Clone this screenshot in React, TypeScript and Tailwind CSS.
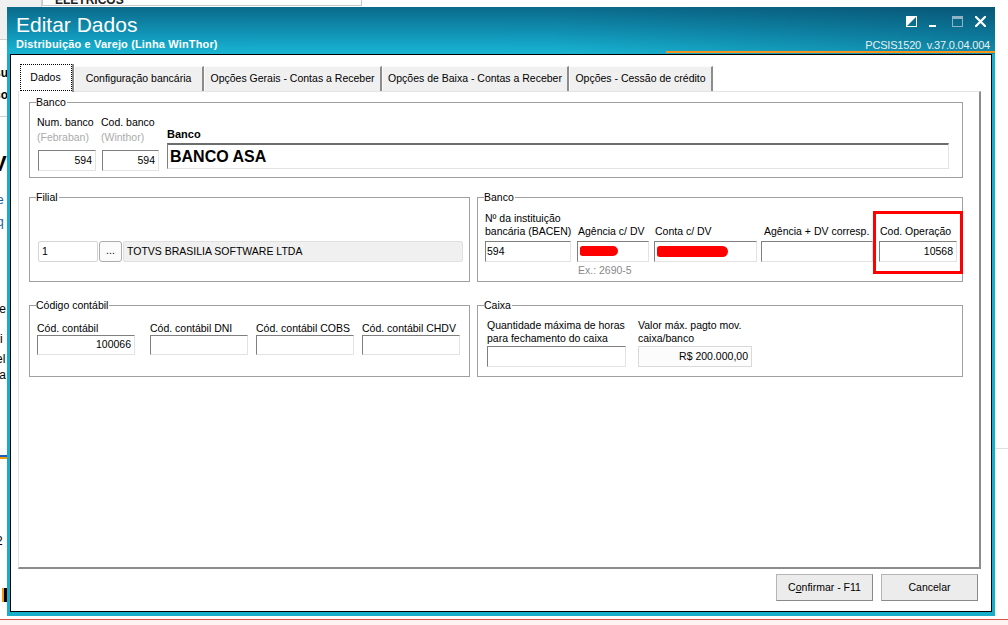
import React from "react";

const sunken =
  "bg-white border border-t-[#7f7f7f] border-l-[#7f7f7f] border-r-[#e3e3e3] border-b-[#e3e3e3]";

function Group({
  title,
  className,
  children,
}: {
  title: string;
  className: string;
  children?: React.ReactNode;
}) {
  return (
    <div className={`relative border border-[#a0a0a0] ${className}`}>
      <span className="absolute left-[6px] top-[-8px] bg-white pr-[1px] leading-[14px] whitespace-nowrap">
        {title}
      </span>
      {children}
    </div>
  );
}

function Backdrop() {
  return (
    <>
      <div className="absolute left-0 top-0 w-[42px] h-[40px] bg-[#f0f0f0] border-r border-b border-[#cfcfcf]" />
      <div className="absolute left-[42px] top-[-6px] w-[320px] h-[12px] bg-white border border-[#c8c8c8] overflow-hidden">
        <span className="absolute left-[12px] top-[-4px] text-[12px] font-bold text-[#222]">ELETRICOS</span>
      </div>
      <span className="absolute left-[-6px] top-[64px] text-[12px] font-bold">su</span>
      <span className="absolute left-[-6px] top-[86px] text-[12px] font-bold">co</span>
      <div className="absolute left-0 top-[116px] w-[7px] h-px bg-[#cfcfcf]" />
      <span className="absolute left-[-8px] top-[153px] text-[22px] font-bold leading-[22px]">V</span>
      <span className="absolute left-[-3px] top-[191px] text-[12px] text-[#1a5a9a]">e</span>
      <span className="absolute left-[-3px] top-[213px] text-[12px] text-[#1a5a9a]">q</span>
      <span className="absolute left-[-4px] top-[300px] text-[12px]">te</span>
      <span className="absolute left-[-4px] top-[330px] text-[12px]">ri</span>
      <span className="absolute left-[-4px] top-[350px] text-[12px]">el</span>
      <span className="absolute left-[-4px] top-[366px] text-[12px]">ta</span>
      <div className="absolute left-0 top-[455px] w-[7px] h-[2px] bg-[#1e5fb4]" />
      <div className="absolute left-0 top-[457px] w-[7px] h-[2px] bg-[#f39c12]" />
      <span className="absolute left-[-4px] top-[500px] text-[12px]">r</span>
      <span className="absolute left-[-4px] top-[532px] text-[12px]">2</span>
      <div className="absolute left-[2px] top-[588px] w-[2px] h-[14px] bg-[#f39c12]" />
      <div className="absolute left-[4px] top-[588px] w-[3px] h-[14px] bg-black" />
      <div className="absolute left-[995px] top-[448px] w-[13px] h-px bg-[#e0e0e0]" />
      <div className="absolute left-0 top-[619px] w-[1008px] h-px bg-[#d9534f]" />
      <div className="absolute left-0 top-[620px] w-[1008px] h-[5px] bg-[#fff4f2]" />
    </>
  );
}

function TitleBar() {
  return (
    <div className="relative h-[47px] flex justify-between bg-[linear-gradient(to_right,rgba(0,0,0,0)_55%,rgba(0,35,65,0.28)),linear-gradient(to_bottom,#0b6a8b_0%,#1196b8_60%,#19b6d3_100%)]">
      <div className="pl-[9px] pt-[6px] text-white">
        <div className="text-[21px] leading-[24px]">Editar Dados</div>
        <div className="mt-[1px] text-[11px] leading-[13px] font-bold tracking-[0.15px] whitespace-nowrap">
          Distribuição e Varejo (Linha WinThor)
        </div>
      </div>
      <div className="flex flex-col items-end pr-[5px] pt-[9px]">
        <div className="flex items-end pr-[4px] h-[11px]">
          <svg width="11" height="11" viewBox="0 0 11 11">
            <rect x="0.5" y="0.5" width="10" height="10" fill="none" stroke="white" />
            <polygon points="0,0 11,0 0,11" fill="white" />
          </svg>
          <div className="ml-[12px] w-[7px] h-[2px] bg-white" />
          <svg className="ml-[16px]" width="11" height="11" viewBox="0 0 11 11">
            <rect x="0.5" y="0.5" width="10" height="10" fill="none" stroke="#8fb3c3" />
            <rect x="0" y="0" width="11" height="3" fill="#8fb3c3" />
          </svg>
          <svg className="ml-[12px]" width="11" height="11" viewBox="0 0 11 11">
            <path d="M1 1 L10 10 M10 1 L1 10" stroke="white" strokeWidth="2.2" strokeLinecap="square" />
          </svg>
        </div>
        <div className="mt-[12px] text-[11px] leading-[13px] text-[#e8eef0] tracking-[-0.2px] whitespace-pre">
          PCSIS1520  v.37.0.04.004
        </div>
      </div>
      <div className="absolute right-0 bottom-[1px] w-[329px] h-[2px] bg-[#f7941d]" />
    </div>
  );
}

const tabBase =
  "h-[25px] bg-[#f0f0f0] border-t border-l border-[#fbfbfb] border-r-2 border-r-[#8c8c8c] flex items-center justify-center whitespace-nowrap";

export default function App() {
  return (
    <div className="relative w-[1008px] h-[625px] overflow-hidden bg-white font-['Liberation_Sans',Arial,sans-serif] text-[10.5px] text-black">
      <Backdrop />
      <div className="absolute left-[7px] top-[7px] w-[988px] h-[609px] flex flex-col bg-[#17aecb]">
        <TitleBar />
        <div className="mx-[3px] h-[558px] border border-black bg-white flex flex-col pl-[7px] pt-[9px]">
          {/* Tabs */}
          <div className="flex items-end h-[27px] pl-px">
            <div className="relative z-10 -mb-px w-[55px] h-[28px] bg-white border-r-2 border-r-[#8c8c8c] flex items-center justify-center">
              <span className="absolute left-[1px] top-0 right-0 bottom-[1px] border border-dotted border-black" />
              Dados
            </div>
            <div className={`${tabBase} w-[130px]`}>Configuração bancária</div>
            <div className={`${tabBase} w-[178px]`}>Opções Gerais - Contas a Receber</div>
            <div className={`${tabBase} w-[187px]`}>Opções de Baixa - Contas a Receber</div>
            <div className={`${tabBase} w-[144px]`}>Opções - Cessão de crédito</div>
          </div>

          {/* Panel */}
          <div className="w-[963px] h-[478px] border-t border-l border-[#e3e3e3] border-r-2 border-b-2 border-r-[#8c8c8c] border-b-[#8c8c8c] pl-[10px] pt-[10px] flex flex-col">
            {/* Group Banco */}
            <Group title="Banco" className="w-[934px] h-[76px] flex pl-[7px]">
              <div className="flex flex-col w-[59px] pt-[12px]">
                <div className="leading-[15px] whitespace-nowrap">Num. banco</div>
                <div className="leading-[15px] text-[#ababab] whitespace-nowrap">(Febraban)</div>
                <div className={`${sunken} ml-px mt-[5px] w-[58px] h-[21px] flex items-center justify-end pr-[3px]`}>594</div>
              </div>
              <div className="flex flex-col w-[58px] ml-[5px] pt-[12px]">
                <div className="leading-[15px] whitespace-nowrap">Cod. banco</div>
                <div className="leading-[15px] text-[#ababab] whitespace-nowrap">(Winthor)</div>
                <div className={`${sunken} ml-px mt-[5px] w-[57px] h-[21px] flex items-center justify-end pr-[3px]`}>594</div>
              </div>
              <div className="flex flex-col flex-1 ml-[8px] mr-[13px] pt-[24px]">
                <div className="leading-[14px] font-bold text-[11px]">Banco</div>
                <div className="mt-[2px] h-[26px] bg-white border border-t-2 border-t-[#6d6d6d] border-l-[#7f7f7f] border-r-[#e3e3e3] border-b-[#e3e3e3] flex items-center pl-[2px] text-[16px] font-bold">
                  BANCO ASA
                </div>
              </div>
            </Group>

            {/* Row 2 */}
            <div className="mt-[19px] flex gap-[7px]">
              <Group title="Filial" className="w-[441px] h-[85px] flex items-start pl-[8px] pt-[43px]">
                <div className="w-[60px] h-[21px] border border-[#d5d5d5] rounded-[2px] bg-white flex items-center pl-[3px]">1</div>
                <div className="ml-px w-[23px] h-[21px] border border-[#adadad] rounded-[3px] bg-[#fbfbfb] flex items-center justify-center leading-none pb-[2px]">...</div>
                <div className="ml-px w-[340px] h-[21px] border border-[#e0e0e0] rounded-[2px] bg-[#f0f0f0] flex items-center pl-[3px] whitespace-nowrap">
                  TOTVS BRASILIA SOFTWARE LTDA
                </div>
              </Group>

              <Group title="Banco" className="w-[486px] h-[85px] flex items-start pl-[7px] pt-[14px]">
                <div className="flex flex-col w-[86px]">
                  <div className="h-[26px] leading-[13px] whitespace-nowrap">
                    Nº da instituição
                    <br />
                    bancária (BACEN)
                  </div>
                  <div className={`${sunken} mt-[3px] h-[21px] flex items-center pl-px`}>594</div>
                </div>
                <div className="flex flex-col w-[72px] ml-[6px]">
                  <div className="h-[26px] leading-[13px] flex items-end pl-px whitespace-nowrap">Agência c/ DV</div>
                  <div className={`${sunken} relative mt-[3px] h-[21px]`}>
                    <div className="absolute left-[2px] top-[4px] w-[38px] h-[10px] bg-[#ff0000] rounded-l-[3px] rounded-r-[6px]" />
                  </div>
                  <div className="mt-[2px] leading-[13px] pl-px text-[#8a8a8a] whitespace-nowrap">Ex.: 2690-5</div>
                </div>
                <div className="flex flex-col w-[103px] ml-[5px]">
                  <div className="h-[26px] leading-[13px] flex items-end pl-px whitespace-nowrap">Conta c/ DV</div>
                  <div className={`${sunken} relative mt-[3px] h-[21px]`}>
                    <div className="absolute left-[2px] top-[4px] w-[71px] h-[11px] bg-[#ff0000] rounded-l-[3px] rounded-r-[6px]" />
                  </div>
                </div>
                <div className="flex flex-col w-[112px] ml-[4px]">
                  <div className="h-[26px] leading-[13px] flex items-end pl-[3px] whitespace-nowrap">Agência + DV corresp.</div>
                  <div className={`${sunken} mt-[3px] h-[21px]`} />
                </div>
                <div className="flex flex-col w-[78px] ml-[6px]">
                  <div className="h-[26px] leading-[13px] flex items-end pl-px whitespace-nowrap">Cod. Operação</div>
                  <div className={`${sunken} mt-[3px] h-[21px] flex items-center justify-end pr-[3px]`}>10568</div>
                </div>
                <div className="absolute left-[395px] top-[13px] w-[90px] h-[63px] border-[3px] border-[#ff0000]" />
              </Group>
            </div>

            {/* Row 3 */}
            <div className="mt-[23px] flex gap-[7px]">
              <Group title="Código contábil" className="w-[441px] h-[72px] flex items-start pl-[7px] pt-[15px]">
                <div className="flex flex-col w-[98px]">
                  <div className="leading-[14px] whitespace-nowrap">Cód. contábil</div>
                  <div className={`${sunken} h-[20px] flex items-center justify-end pr-[3px]`}>100066</div>
                </div>
                <div className="flex flex-col w-[98px] ml-[15px]">
                  <div className="leading-[14px] whitespace-nowrap">Cód. contábil DNI</div>
                  <div className={`${sunken} h-[20px]`} />
                </div>
                <div className="flex flex-col w-[98px] ml-[8px]">
                  <div className="leading-[14px] whitespace-nowrap">Cód. contábil COBS</div>
                  <div className={`${sunken} h-[20px]`} />
                </div>
                <div className="flex flex-col w-[98px] ml-[8px]">
                  <div className="leading-[14px] whitespace-nowrap">Cód. contábil CHDV</div>
                  <div className={`${sunken} h-[20px]`} />
                </div>
              </Group>

              <Group title="Caixa" className="w-[486px] h-[72px] flex items-start pl-[9px] pt-[13px]">
                <div className="flex flex-col w-[139px]">
                  <div className="leading-[13px] whitespace-nowrap">
                    Quantidade máxima de horas
                    <br />
                    para fechamento do caixa
                  </div>
                  <div className={`${sunken} mt-[1px] h-[21px]`} />
                </div>
                <div className="flex flex-col w-[114px] ml-[12px]">
                  <div className="leading-[13px] whitespace-nowrap">
                    Valor máx. pagto mov.
                    <br />
                    caixa/banco
                  </div>
                  <div className="mt-[1px] h-[21px] bg-[#fcfcfc] border border-[#d9d9d9] flex items-center justify-end pr-[3px]">
                    R$ 200.000,00
                  </div>
                </div>
              </Group>
            </div>
          </div>

          {/* Buttons */}
          <div className="w-[963px] mt-[5px] flex justify-end gap-[8px] pr-[3px]">
            <div className="w-[97px] h-[27px] bg-[#ececec] border border-[#b4b4b4] border-r-[#8a8a8a] border-b-[#8a8a8a] flex items-center justify-center whitespace-nowrap">
              C<span className="underline">o</span>nfirmar - F11
            </div>
            <div className="w-[97px] h-[27px] bg-[#ececec] border border-[#b4b4b4] border-r-[#8a8a8a] border-b-[#8a8a8a] flex items-center justify-center">
              Cancelar
            </div>
          </div>
        </div>
      </div>
    </div>
  );
}
